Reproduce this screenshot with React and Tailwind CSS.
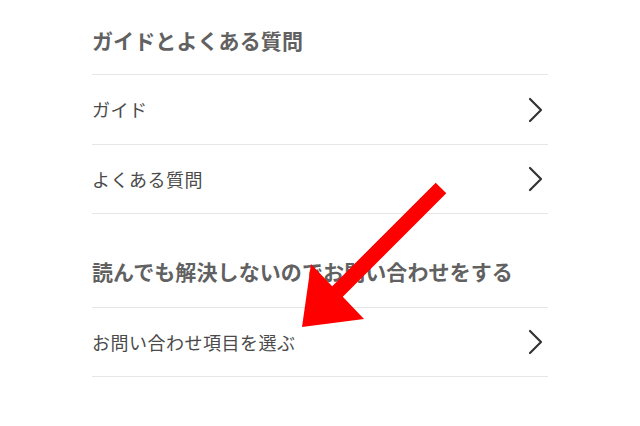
export default function App() {
  const font = { fontFamily: '"Noto Sans CJK JP", "Noto Sans", sans-serif' };
  const Chevron = () => (
    <svg width="16" height="26" viewBox="0 0 16 26" className="shrink-0">
      <path d="M3 2 L14 13 L3 24" fill="none" stroke="#333" strokeWidth="2.2" strokeLinecap="round" strokeLinejoin="round" />
    </svg>
  );
  const Row = ({ label, h, last }) => (
    <div className={`${h} flex items-center justify-between border-t border-[#e6e6e6] ${last ? 'border-b' : ''}`}>
      <span className="text-[18px] text-[#4a4a4a] tracking-[0.5px]">{label}</span>
      <div className="pr-[5px]"><Chevron /></div>
    </div>
  );
  return (
    <div className="relative w-[640px] h-[426px] bg-white overflow-hidden" style={font}>
      <div className="ml-[92px] w-[456px]">
        <div className="h-[74px] flex items-end pb-[20px]">
          <h2 className="text-[21px] font-bold text-[#616161] leading-[28px] tracking-[0.1px]">ガイドとよくある質問</h2>
        </div>
        <Row label="ガイド" h="h-[70px]" />
        <Row label="よくある質問" h="h-[69px]" />
        <div className="h-[94px] flex items-end pb-[22px] border-t border-[#e6e6e6]">
          <h2 className="text-[21px] font-bold text-[#616161] leading-[28px] tracking-[0.1px]">読んでも解決しないのでお問い合わせをする</h2>
        </div>
        <Row label="お問い合わせ項目を選ぶ" h="h-[70px]" last />
      </div>
      <svg className="absolute left-0 top-0" width="640" height="426" viewBox="0 0 640 426">
        <polygon points="435.7,182.7 446.3,193.3 342.8,296.8 364,319 302,327 311,264 332.2,286.2" fill="#ff0000" />
      </svg>
    </div>
  );
}
